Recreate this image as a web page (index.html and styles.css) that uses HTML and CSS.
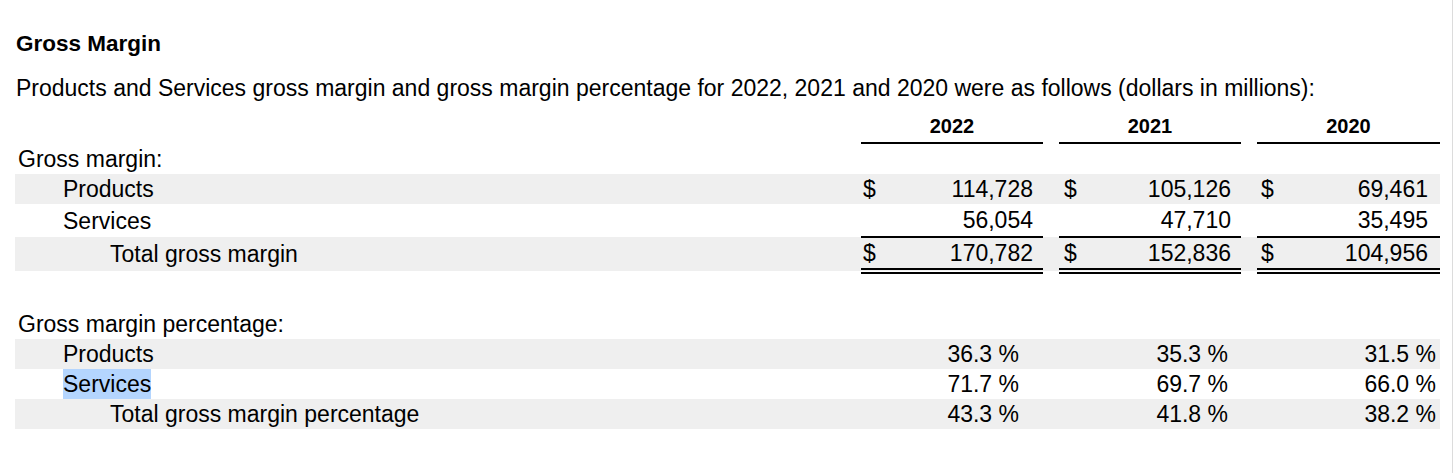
FILE: index.html
```html
<!DOCTYPE html>
<html>
<head>
<meta charset="utf-8">
<link rel="stylesheet" href="styles.css">
</head>
<body>
<div class="page">
  <h2 class="title">Gross Margin</h2>
  <p class="intro">Products and Services gross margin and gross margin percentage for 2022, 2021 and 2020 were as follows (dollars in millions):</p>
  <table class="fin">
    <colgroup>
      <col class="c-label"><col class="c-year"><col class="c-gap"><col class="c-year"><col class="c-gap"><col class="c-year3">
    </colgroup>
    <tr class="head">
      <td></td><th class="ul">2022</th><td></td><th class="ul">2021</th><td></td><th class="ul">2020</th>
    </tr>
    <tr class="row">
      <td class="l0">Gross margin:</td><td></td><td></td><td></td><td></td><td></td>
    </tr>
    <tr class="row band">
      <td class="l1">Products</td>
      <td class="y1"><span class="amt"><span>$</span><span>114,728</span></span></td><td></td>
      <td class="y2"><span class="amt"><span>$</span><span>105,126</span></span></td><td></td>
      <td class="y3"><span class="amt"><span>$</span><span>69,461</span></span></td>
    </tr>
    <tr class="row">
      <td class="l1">Services</td>
      <td class="y1 ul"><span class="amt"><span></span><span>56,054</span></span></td><td></td>
      <td class="y2 ul"><span class="amt"><span></span><span>47,710</span></span></td><td></td>
      <td class="y3 ul"><span class="amt"><span></span><span>35,495</span></span></td>
    </tr>
    <tr class="row band total">
      <td class="l2">Total gross margin</td>
      <td class="y1 dbl"><span class="amt"><span>$</span><span>170,782</span></span></td><td></td>
      <td class="y2 dbl"><span class="amt"><span>$</span><span>152,836</span></span></td><td></td>
      <td class="y3 dbl"><span class="amt"><span>$</span><span>104,956</span></span></td>
    </tr>
    <tr class="spacer"><td colspan="6"></td></tr>
    <tr class="row">
      <td class="l0">Gross margin percentage:</td><td></td><td></td><td></td><td></td><td></td>
    </tr>
    <tr class="row band">
      <td class="l1">Products</td>
      <td class="p1">36.3 %</td><td></td><td class="p2">35.3 %</td><td></td><td class="p3">31.5 %</td>
    </tr>
    <tr class="row">
      <td class="l1"><span class="sel">Services</span></td>
      <td class="p1">71.7 %</td><td></td><td class="p2">69.7 %</td><td></td><td class="p3">66.0 %</td>
    </tr>
    <tr class="row band">
      <td class="l2">Total gross margin percentage</td>
      <td class="p1">43.3 %</td><td></td><td class="p2">41.8 %</td><td></td><td class="p3">38.2 %</td>
    </tr>
  </table>
</div>
</body>
</html>
```
FILE: styles.css
```css
html, body {
  margin: 0;
  padding: 0;
  background: #ffffff;
}
body {
  font-family: "Liberation Sans", Arial, Helvetica, sans-serif;
  color: #000;
}
.page {
  box-sizing: border-box;
  width: 1453px;
  min-height: 473px;
  border-right: 1px solid #dcdcdc;
  padding: 31px 0 0 15px;
}
.title {
  margin: 0 0 0 1px;
  font-size: 22.5px;
  line-height: 26px;
  font-weight: bold;
}
.intro {
  margin: 18px 0 0 1px;
  font-size: 23px;
  line-height: 26px;
}
.fin {
  margin-top: 8px;
  border-collapse: collapse;
  border-spacing: 0;
  width: 1425px;
  table-layout: fixed;
  font-size: 23px;
}
.c-label { width: 846px; }
.c-year { width: 182px; }
.c-gap { width: 16px; }
.c-year3 { width: 183px; }
.fin td, .fin th {
  padding: 0;
  white-space: nowrap;
}
.head th {
  font-size: 20px;
  font-weight: bold;
  text-align: center;
  height: 28px;
  line-height: 24px;
  vertical-align: top;
  padding-top: 5px;
}
.head th.ul {
  border-bottom: 2px solid #000;
}
.row td {
  height: 30px;
  line-height: 30px;
}
.band td {
  background: #efefef;
}
.l0 { padding-left: 3px !important; }
.l1 { padding-left: 48px !important; }
.l2 { padding-left: 95px !important; }
.amt {
  display: flex;
  justify-content: space-between;
}
.y1 { padding: 0 10px 0 2px !important; }
.y2 { padding: 0 10px 0 5px !important; }
.y3 { padding: 0 12px 0 4px !important; }
.row td.ul {
  border-bottom: 2px solid #000;
  height: 32px;
}
.total td {
  height: 30px;
}
.row td.dbl {
  border-bottom: 6px double #000;
}
.p1, .p2, .p3 { text-align: right; }
.p1 { padding-right: 24px !important; }
.p2 { padding-right: 13px !important; }
.p3 { padding-right: 4px !important; }
.spacer td {
  height: 35px;
}
.sel {
  background: #b4d5fe;
  padding: 2px 0;
}
```
